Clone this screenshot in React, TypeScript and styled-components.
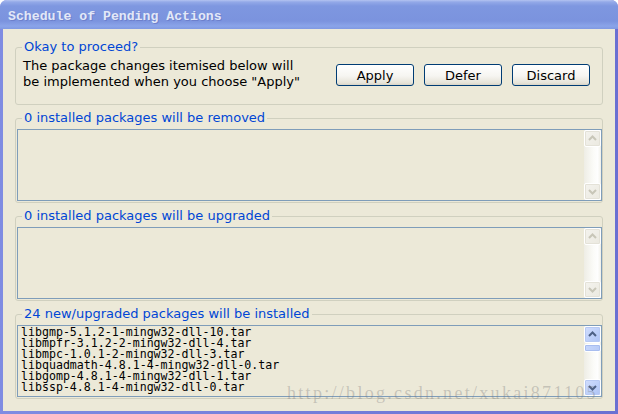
import React from "react";
import styled, { createGlobalStyle } from "styled-components";

const GlobalStyle = createGlobalStyle`
  html, body {
    margin: 0;
    padding: 0;
    background: #ffffff;
  }
  body {
    font-family: "DejaVu Sans", Verdana, sans-serif;
  }
`;

const Window = styled.div`
  position: relative;
  width: 618px;
  height: 414px;
  display: flex;
  flex-direction: column;
  border-radius: 7px 7px 0 0;
  overflow: hidden;
  background: linear-gradient(to right, #7f8ce2, #6a70d2);
`;

const TitleBar = styled.div`
  flex: none;
  height: 29px;
  box-sizing: border-box;
  padding: 4px 8px 0;
  display: flex;
  align-items: center;
  background: linear-gradient(
    to bottom,
    #b4c3f1 0,
    #93a9e8 2px,
    #7e97e0 6px,
    #7b93de 21px,
    #8aa4e9 26px,
    #8099e2 29px
  );
  font-family: "Liberation Mono", "Courier New", monospace;
  font-weight: bold;
  font-size: 13.2px;
  color: #e2e8f8;
  text-shadow: 1px 1px 0 #6d80cc;
`;

const Client = styled.div`
  flex: 1;
  margin: 0 3px 3px 3px;
  padding: 10px 12px 0;
  background: #ece9d8;
  display: flex;
  flex-direction: column;
`;

const Group = styled.fieldset`
  margin: 0;
  padding: 0;
  min-width: 0;
  border: 1px solid #d0d0bf;
  border-radius: 3px;

  & + & {
    margin-top: 5px;
  }
`;

const Legend = styled.legend`
  margin-left: 6px;
  padding: 0 2px;
  color: #0046d5;
  font-size: 13px;
  line-height: 16px;
`;

const IntroRow = styled.div`
  display: flex;
  align-items: center;
  padding: 3px 12px 14px 7px;
`;

const IntroText = styled.p`
  margin: 0;
  font-size: 13px;
  line-height: 16px;
  color: #000;
`;

const Buttons = styled.div`
  margin-left: auto;
  margin-top: 2px;
  display: flex;
  gap: 10px;
`;

const PushButton = styled.button`
  width: 78px;
  height: 22px;
  padding: 0;
  border: 1px solid #003c74;
  border-radius: 3px;
  background: linear-gradient(to bottom, #ffffff 0%, #f6f5f1 55%, #e6e3d8 90%, #d8d4c6 100%);
  font-family: "DejaVu Sans", Verdana, sans-serif;
  font-size: 13px;
  color: #000;
`;

const ListBox = styled.div`
  height: 72px;
  box-sizing: border-box;
  margin: 3px 0 1px 1px;
  border: 1px solid #7f9db9;
  background: #ece9d8;
  display: flex;
  overflow: hidden;
`;

const Items = styled.div`
  flex: 1;
  padding: 1px 3px;
  font-family: "DejaVu Sans Mono", "Lucida Console", monospace;
  font-size: 11.6px;
  line-height: 11px;
  color: #000;
  white-space: pre;
  overflow: hidden;
`;

const ScrollBar = styled.div`
  flex: none;
  width: 17px;
  display: flex;
  flex-direction: column;
  background: linear-gradient(to right, #eeede5 0%, #fbfbf8 55%, #fefefe 80%, #f2f1ea 100%);
`;

const ArrowButton = styled.div<{ $active: boolean }>`
  flex: none;
  width: 17px;
  height: 17px;
  box-sizing: border-box;
  border: 1px solid #ffffff;
  border-radius: 2px;
  display: flex;
  align-items: center;
  justify-content: center;
  background: ${(p) =>
    p.$active
      ? "linear-gradient(135deg, #d2defd 0%, #bccff9 60%, #aec3f4 100%)"
      : "linear-gradient(135deg, #f4f3ee 0%, #ebe9e0 100%)"};
  box-shadow: inset 0 0 0 1px ${(p) => (p.$active ? "#b7c9f3" : "#e4e2d8")};
  color: ${(p) => (p.$active ? "#4d6185" : "#c8c6b8")};
`;

const Track = styled.div`
  flex: 1;
  padding-top: 1px;
`;

const Thumb = styled.div`
  height: 8px;
  box-sizing: border-box;
  border: 1px solid #ffffff;
  border-radius: 2px;
  background: linear-gradient(to right, #c6d6fb, #b8cbf7);
  box-shadow: inset 0 0 0 1px #a8bdef;
`;

const Watermark = styled.div`
  position: absolute;
  left: 287px;
  top: 383px;
  font-family: "Liberation Serif", "Times New Roman", serif;
  font-size: 18px;
  line-height: 20px;
  letter-spacing: 2.3px;
  color: rgba(120, 120, 120, 0.34);
  white-space: nowrap;
  pointer-events: none;
`;

const Chevron = ({ up }: { up: boolean }) => (
  <svg width="15" height="15" viewBox="0 0 15 15">
    <polyline
      points={up ? "4,9 7.5,5.5 11,9" : "4,6 7.5,9.5 11,6"}
      fill="none"
      stroke="currentColor"
      strokeWidth="2"
    />
  </svg>
);

type ListProps = {
  items: string[];
  scrollable?: boolean;
};

const PackageList = ({ items, scrollable = false }: ListProps) => {
  return (
    <ListBox>
      <Items>{items.join("\n")}</Items>
      <ScrollBar>
        <ArrowButton $active={scrollable}>
          <Chevron up />
        </ArrowButton>
        <Track>{scrollable && <Thumb />}</Track>
        <ArrowButton $active={scrollable}>
          <Chevron up={false} />
        </ArrowButton>
      </ScrollBar>
    </ListBox>
  );
};

// only the rows that are in view of the 24
const installed = [
  "libgmp-5.1.2-1-mingw32-dll-10.tar",
  "libmpfr-3.1.2-2-mingw32-dll-4.tar",
  "libmpc-1.0.1-2-mingw32-dll-3.tar",
  "libquadmath-4.8.1-4-mingw32-dll-0.tar",
  "libgomp-4.8.1-4-mingw32-dll-1.tar",
  "libssp-4.8.1-4-mingw32-dll-0.tar",
];

const App = () => {
  return (
    <>
      <GlobalStyle />
      <Window>
        <TitleBar>Schedule of Pending Actions</TitleBar>
        <Client>
          <Group>
            <Legend>Okay to proceed?</Legend>
            <IntroRow>
              <IntroText>
                The package changes itemised below will
                <br />
                be implemented when you choose "Apply"
              </IntroText>
              <Buttons>
                <PushButton>Apply</PushButton>
                <PushButton>Defer</PushButton>
                <PushButton>Discard</PushButton>
              </Buttons>
            </IntroRow>
          </Group>
          <Group>
            <Legend>0 installed packages will be removed</Legend>
            <PackageList items={[]} />
          </Group>
          <Group>
            <Legend>0 installed packages will be upgraded</Legend>
            <PackageList items={[]} />
          </Group>
          <Group>
            <Legend>24 new/upgraded packages will be installed</Legend>
            <PackageList items={installed} scrollable />
          </Group>
        </Client>
        <Watermark>http://blog.csdn.net/xukai871105</Watermark>
      </Window>
    </>
  );
};

export default App;
